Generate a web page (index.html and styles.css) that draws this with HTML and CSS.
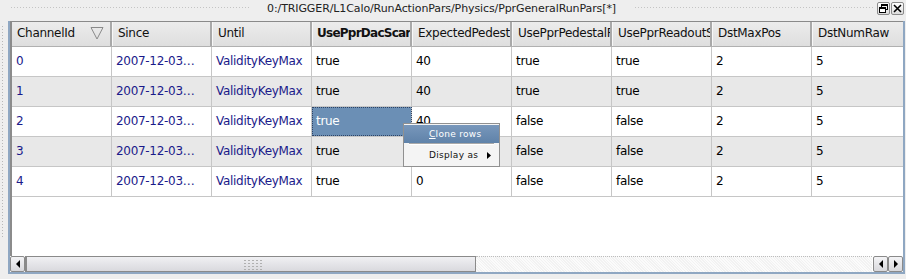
FILE: index.html
```html
<!DOCTYPE html>
<html>
<head>
<meta charset="utf-8">
<link rel="stylesheet" href="styles.css">
</head>
<body>
<div class="titlebar">
  <div class="grip-h"></div>
  <div class="title">0:/TRIGGER/L1Calo/RunActionPars/Physics/PprGeneralRunPars[*]</div>
  <div class="grip-h grip-right"></div>
  <div class="tbtns">
    <div class="tbtn"><svg width="11" height="11" viewBox="0 0 11 11"><rect x="3.5" y="1.5" width="6" height="5" fill="none" stroke="#000"/><rect x="3.5" y="1.5" width="6" height="1.5" fill="#000"/><rect x="1.5" y="4.5" width="6" height="5" fill="#fff" stroke="#000"/><rect x="1.5" y="4.5" width="6" height="1.5" fill="#000"/></svg></div>
    <div class="tbtn"><svg width="11" height="11" viewBox="0 0 11 11"><path d="M2 2 L9 9 M9 2 L2 9" stroke="#000" stroke-width="1.6"/></svg></div>
  </div>
</div>
<div class="main">
  <div class="grip-v"></div>
  <div class="frame">
    <div class="table">
      <div class="hrow">
        <div class="hc first">ChannelId<svg class="sort" width="14" height="14" viewBox="0 0 14 14"><path d="M1 1.5 H13 L7 13 Z" fill="none" stroke="#8a8a8a"/></svg></div>
        <div class="hc">Since</div>
        <div class="hc">Until</div>
        <div class="hc bold">UsePprDacScar</div>
        <div class="hc">ExpectedPedest</div>
        <div class="hc">UsePprPedestalF</div>
        <div class="hc">UsePprReadoutS</div>
        <div class="hc">DstMaxPos</div>
        <div class="hc last">DstNumRaw</div>
      </div>
      <div class="row">
        <div class="c key">0</div><div class="c key">2007-12-03…</div><div class="c key">ValidityKeyMax</div>
        <div class="c">true</div><div class="c">40</div><div class="c">true</div><div class="c">true</div><div class="c">2</div><div class="c last">5</div>
      </div>
      <div class="row alt">
        <div class="c key">1</div><div class="c key">2007-12-03…</div><div class="c key">ValidityKeyMax</div>
        <div class="c">true</div><div class="c">40</div><div class="c">true</div><div class="c">true</div><div class="c">2</div><div class="c last">5</div>
      </div>
      <div class="row">
        <div class="c key">2</div><div class="c key">2007-12-03…</div><div class="c key">ValidityKeyMax</div>
        <div class="c sel">true</div><div class="c">40</div><div class="c">false</div><div class="c">false</div><div class="c">2</div><div class="c last">5</div>
      </div>
      <div class="row alt">
        <div class="c key">3</div><div class="c key">2007-12-03…</div><div class="c key">ValidityKeyMax</div>
        <div class="c">true</div><div class="c">0</div><div class="c">false</div><div class="c">false</div><div class="c">2</div><div class="c last">5</div>
      </div>
      <div class="row">
        <div class="c key">4</div><div class="c key">2007-12-03…</div><div class="c key">ValidityKeyMax</div>
        <div class="c">true</div><div class="c">0</div><div class="c">false</div><div class="c">false</div><div class="c">2</div><div class="c last">5</div>
      </div>
      <div class="filler"></div>
    </div>
    <div class="hscroll">
      <div class="sbtn"><svg width="6" height="8" viewBox="0 0 6 8"><path d="M5 0 V8 L1 4 Z" fill="#000"/></svg></div>
      <div class="thumb"><div class="thumb-grip"></div></div>
      <div class="track"></div>
      <div class="sbtn sb2"><svg width="6" height="8" viewBox="0 0 6 8"><path d="M5 0 V8 L1 4 Z" fill="#000"/></svg></div>
      <div class="sbtn"><svg width="6" height="8" viewBox="0 0 6 8"><path d="M1 0 V8 L5 4 Z" fill="#000"/></svg></div>
    </div>
    <div class="menu">
      <div class="mi active"><span class="u">C</span>lone rows</div>
      <div class="msep"></div>
      <div class="mi">Display as<svg class="marrow" width="4" height="7" viewBox="0 0 4 7"><path d="M0 0 V7 L4 3.5 Z" fill="#000"/></svg></div>
    </div>
  </div>
</div>
</body>
</html>
```
FILE: styles.css
```css
* { box-sizing: border-box; }
html, body { margin: 0; padding: 0; }
body {
  width: 906px;
  height: 279px;
  background: #eeeeee;
  font-family: "DejaVu Sans", sans-serif;
  font-size: 12px;
  overflow: hidden;
}
.titlebar {
  height: 21px;
  display: flex;
  align-items: center;
  padding-left: 10px;
}
.grip-h {
  flex: 1;
  height: 3px;
  margin-top: -6px;
  background-image: radial-gradient(circle, #c4c4c4 0.6px, transparent 0.8px);
  background-size: 3px 3px;
}
.grip-right { margin-left: 18px; margin-right: 4px; }
.title {
  font-size: 11px;
  color: #222;
  margin-left: 18px;
  margin-top: -5px;
  letter-spacing: -0.1px;
}
.tbtns { display: flex; gap: 1px; margin-right: 2px; margin-top: -4px; }
.tbtn {
  width: 13px; height: 13px;
  border: 1px solid #8a8a8a;
  border-radius: 2px;
  background: linear-gradient(#ffffff, #dcdcdc);
  display: flex; align-items: center; justify-content: center;
}
.main { display: flex; height: 253px; }
.grip-v {
  width: 8px;
  background-image: radial-gradient(circle, #b8b8b8 0.6px, transparent 0.8px);
  background-size: 3px 3px;
  background-position: 1px 0;
  background-repeat: repeat-y;
  height: 212px;
  margin-top: 4px;
}
.frame {
  position: relative;
  width: 897px;
  height: 253px;
  border-left: 2px solid #8fa7c2;
  border-right: 2px solid #8fa7c2;
  border-bottom: 2px solid #8fa7c2;
  background: #fff;
  display: flex;
  flex-direction: column;
  overflow: hidden;
}
.table {
  flex: 1;
  border-left: 2px solid #8b8b8b;
  overflow: hidden;
  display: flex;
  flex-direction: column;
}
.hrow {
  display: flex;
  height: 26px;
  flex: none;
  background: linear-gradient(#ececec, #dedede);
  border-top: 1px solid #8a8a8a;
  border-bottom: 1px solid #b0b0b0;
}
.hc {
  width: 100px;
  flex: none;
  padding-left: 5px;
  line-height: 23px;
  color: #111;
  letter-spacing: -0.3px;
  border-right: 2px solid #a9a9a9;
  border-left: 1px solid #f8f8f8;
  white-space: nowrap;
  overflow: hidden;
  position: relative;
}
.hc.first { border-left: none; }
.hc.bold { font-weight: bold; letter-spacing: -0.75px; padding-left: 4px; }
.hc.last { width: 94px; border-right: none; }
.sort { position: absolute; right: 6px; top: 4px; }
.row {
  display: flex;
  height: 30px;
  flex: none;
  border-bottom: 1px solid #c6c6c6;
}
.row.alt { background: #e8e8e8; }
.c {
  width: 100px;
  flex: none;
  padding-left: 4px;
  line-height: 29px;
  color: #000;
  letter-spacing: -0.3px;
  border-right: 1px solid #c6c6c6;
  white-space: nowrap;
  overflow: hidden;
}
.c.key { color: #1a1a8a; }
.c.last { width: 94px; border-right: none; }
.c.sel {
  background: #6b8fb5;
  color: #fff;
  outline: 1px dotted #2e4466;
  outline-offset: -1px;
}
.filler { flex: 1; }
.hscroll {
  height: 16px;
  flex: none;
  display: flex;
  background: #fff;
}
.sbtn {
  width: 15px;
  height: 16px;
  flex: none;
  border: 1px solid #8a8a8a;
  border-radius: 2px;
  background: linear-gradient(#f4f4f6, #d8d8dc);
  display: flex; align-items: center; justify-content: center;
}
.thumb {
  width: 451px;
  flex: none;
  border: 1px solid #8a8a8a;
  border-left: 2px solid #8a8a8a;
  background: linear-gradient(#f0f0f3, #d9d9de);
  display: flex; align-items: center; justify-content: center;
}
.thumb-grip {
  width: 19px; height: 11px;
  margin-left: 2px;
  background-image: radial-gradient(circle, #b0b0b0 0.6px, transparent 0.8px);
  background-size: 4px 3px;
}
.track {
  flex: 1;
  border-top: 1px dotted #bdbdbd;
  background-image: repeating-linear-gradient(45deg, #f2f2f2 0 1px, #fbfbfb 1px 2px);
}
.sb2 { margin-left: 1px; }
.menu {
  position: absolute;
  left: 393px;
  top: 102px;
  width: 97px;
  background: #f4f4f4;
  border: 1px solid #909090;
  padding: 1px 0;
  font-size: 9px;
  letter-spacing: 0.3px;
  color: #111;
}
.mi {
  height: 19px;
  line-height: 19px;
  padding-left: 25px;
  position: relative;
}
.mi.active {
  background: linear-gradient(#7897bb, #5f82a9);
  color: #fff;
  height: 18px;
  line-height: 18px;
}
.u { text-decoration: underline; }
.msep { height: 2px; border-top: 1px solid #a9a9a9; border-bottom: 1px solid #fff; margin: 0 5px 1px; }
.marrow { position: absolute; left: 83px; top: 6px; }
```
